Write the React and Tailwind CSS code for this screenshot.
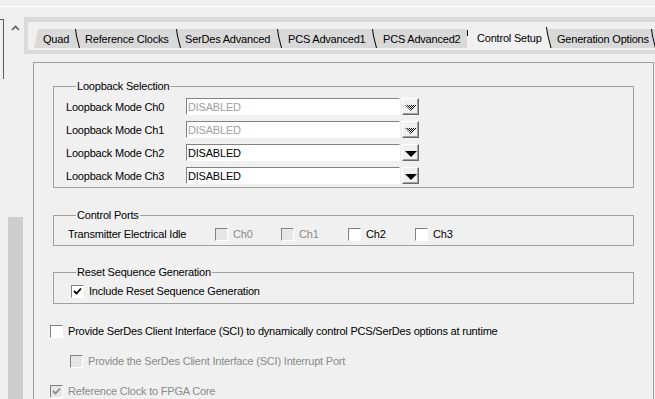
// Control Setup page of a tabbed SerDes configuration dialog (classic Windows look)
const font = "font-['Liberation_Sans',Arial,sans-serif]";

// Gray tab in the strip, followed by its slanted separator
function Tab({ label, className }) {
  return (
    <div className={`h-[19px] bg-[#d9d9d9] pt-[4px] text-[11px] leading-[13px] whitespace-nowrap text-black ${className}`}>
      {label}
    </div>
  );
}

function Sep() {
  return (
    <svg width="5" height="19" className="shrink-0 block">
      <rect width="5" height="19" fill="#d9d9d9" />
      <path d="M0.5 0 L1.5 7 L4.5 19" stroke="#000" fill="none" />
    </svg>
  );
}

// Small down arrow button of a combo box
function ComboButton({ disabled }) {
  return (
    <div className="w-[17px] h-[17px] bg-[#f0f0f0] border-t border-l border-white border-b border-r border-b-[#696969] border-r-[#696969] shadow-[inset_-1px_-1px_0_#a0a0a0] flex">
      <svg width="15" height="15" className="block">
        <defs>
          <pattern id="dith" width="2" height="2" patternUnits="userSpaceOnUse">
            <rect width="1" height="1" fill="#000" />
            <rect x="1" y="1" width="1" height="1" fill="#000" />
          </pattern>
        </defs>
        <polygon points="2,6 14,6 8,12" fill={disabled ? "url(#dith)" : "#000"} />
      </svg>
    </div>
  );
}

function ComboRow({ label, disabled }) {
  return (
    <div className="flex items-center h-[17px]">
      <div className="w-[120px] pt-px text-[11px] leading-[13px] text-black">{label}</div>
      <div className="w-[214px] h-[17px] bg-white border-t border-l border-[#828282] border-b border-r border-b-white border-r-white flex items-center pl-[1px] pt-px">
        <span className={`text-[11px] leading-[13px] ${disabled ? "text-[#a0a0a0]" : "text-black"}`}>DISABLED</span>
      </div>
      <div className="ml-[2px]">
        <ComboButton disabled={disabled} />
      </div>
    </div>
  );
}

// Sunken 13x13 check box
function Check({ checked, disabled, label, className = "" }) {
  return (
    <div className={`flex items-center h-[13px] ${className}`}>
      <div
        className={`w-[13px] h-[13px] shrink-0 border-t border-l border-[#828282] border-b border-r border-b-white border-r-white ${
          disabled ? "bg-[#e6e6e6]" : "bg-white"
        }`}
      >
        {checked && (
          <svg width="11" height="11" className="block">
            <path d="M2 5 L4.5 7.5 L9 2.5" stroke={disabled ? "#8a8a8a" : "#000"} strokeWidth="1.8" fill="none" />
          </svg>
        )}
      </div>
      <span className={`ml-[5px] text-[11px] leading-[13px] whitespace-nowrap ${disabled ? "text-[#8a8a8a]" : "text-black"}`}>
        {label}
      </span>
    </div>
  );
}

// Etched group box with a caption on its top line
function Group({ title, className, bodyClass, children }) {
  return (
    <fieldset className={`mx-[19px] border border-[#a0a0a0] ${className}`}>
      <legend className="ml-[22px] px-[1px] text-[11px] leading-[13px] text-black">{title}</legend>
      <div className={bodyClass}>{children}</div>
    </fieldset>
  );
}

export default function App() {
  return (
    <div className={`w-[655px] h-[399px] overflow-hidden bg-[#f0f0f0] flex flex-col tracking-[-0.2px] ${font}`}>
      {/* top edge of the dialog */}
      <div className="h-[6px] shrink-0" />
      <div className="h-px bg-white shrink-0" />
      <div className="h-[10px] shrink-0" />

      <div className="flex flex-1 min-h-0">
        {/* left frame and scroll bar */}
        <div className="w-[24px] flex shrink-0">
          <div className="w-[4px] mt-[2px] border-t border-r border-[#5a5a5a] h-[60px]" />
          <div className="w-[3px]" />
          <div className="w-[17px] flex flex-col">
            <svg width="17" height="16" className="block shrink-0">
              <path d="M5 13 L8.5 9.5 L12 13" stroke="#606060" strokeWidth="1.6" fill="none" />
            </svg>
            <div className="flex-1" />
            <div className="ml-[1px] w-[15px] h-[182px] bg-[#cdcdcd]" />
          </div>
        </div>

        {/* tab strip and page */}
        <div className="flex-1 flex flex-col min-w-0">
          <div className="h-[37px] bg-[#d9d9d9] pl-[4px] pt-[5px] pb-[4px] shrink-0">
            <div className="h-[28px] bg-[#f0f0f0] pl-[6px] flex items-start">
              <div className="flex items-end h-[26px]">
                <Tab label="Quad" className="w-[41px] pl-[9px] [clip-path:polygon(4px_0,100%_0,100%_100%,0_100%)]" />
                <Sep />
                <Tab label="Reference Clocks" className="w-[96px] pl-[5px]" />
                <Sep />
                <Tab label="SerDes Advanced" className="w-[96px] pl-[4px]" />
                <Sep />
                <Tab label="PCS Advanced1" className="w-[90px] pl-[6px]" />
                <Sep />
                <Tab label="PCS Advanced2" className="w-[90px] pl-[6px]" />
                {/* selected tab */}
                <div className="w-[79px] h-[23px] flex">
                  <div className="w-px h-[6px] mt-[5px] bg-black" />
                  <div className="pl-[9px] pt-[7px] text-[11px] leading-[13px] text-black whitespace-nowrap">Control Setup</div>
                </div>
                <svg width="6" height="23" className="shrink-0 block">
                  <polygon points="1,4 6,4 6,23 4.6,23" fill="#d9d9d9" />
                  <path d="M0.5 2 L1.5 9 L5 23" stroke="#000" fill="none" />
                </svg>
                <Tab label="Generation Options" className="w-[99px] pl-[5px]" />
                <Sep />
              </div>
            </div>
          </div>

          {/* page body */}
          <div className="mt-[8px] ml-[9px] mr-[1px] flex-1 border-l border-t border-r border-[#a0a0a0] flex flex-col">
            <Group title="Loopback Selection" className="mt-[17px]" bodyClass="pl-[12px] pt-[5px] pb-[3px] flex flex-col gap-[6px]">
              <ComboRow label="Loopback Mode Ch0" disabled />
              <ComboRow label="Loopback Mode Ch1" disabled />
              <ComboRow label="Loopback Mode Ch2" />
              <ComboRow label="Loopback Mode Ch3" />
            </Group>

            <Group title="Control Ports" className="mt-[21px]" bodyClass="pl-[14px] pt-[6px] pb-[4px] flex items-center">
              <div className="w-[147px] text-[11px] leading-[13px] text-black whitespace-nowrap">Transmitter Electrical Idle</div>
              <Check label="Ch0" disabled className="w-[66px]" />
              <Check label="Ch1" disabled className="w-[67px]" />
              <Check label="Ch2" className="w-[67px]" />
              <Check label="Ch3" />
            </Group>

            <Group title="Reset Sequence Generation" className="mt-[20px]" bodyClass="pl-[17px] pt-[6px] pb-[5px]">
              <Check label="Include Reset Sequence Generation" checked />
            </Group>

            <Check
              label="Provide SerDes Client Interface (SCI) to dynamically control PCS/SerDes options at runtime"
              className="mt-[21px] ml-[16px]"
            />
            <Check
              label="Provide the SerDes Client Interface (SCI) Interrupt Port"
              disabled
              className="mt-[17px] ml-[36px]"
            />
            <Check label="Reference Clock to FPGA Core" checked disabled className="mt-[17px] ml-[16px]" />
          </div>
        </div>
      </div>
    </div>
  );
}
